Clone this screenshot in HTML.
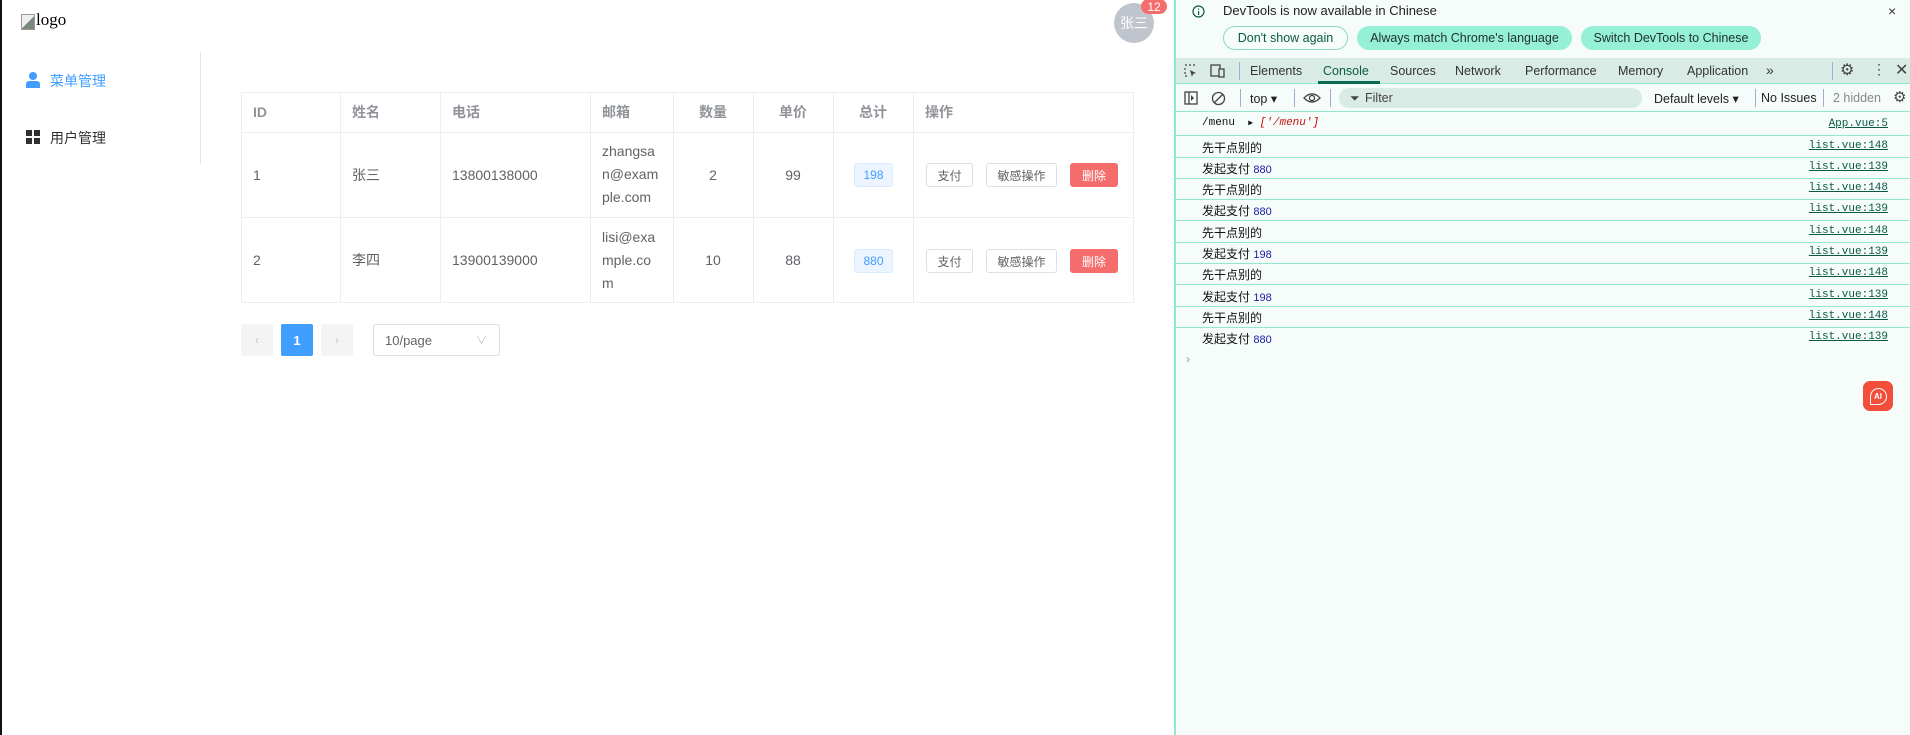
<!DOCTYPE html>
<html><head><meta charset="utf-8"><style>
*{box-sizing:border-box;margin:0;padding:0}
body{width:1910px;height:735px;overflow:hidden;background:#fff;font-family:"Liberation Sans","Noto Sans CJK SC",sans-serif;position:relative;font-size:14px;color:#606266}
.a{position:absolute}
.cell{position:absolute;display:flex;align-items:center;padding-left:12px;font-size:14px;color:#606266}
.hl{position:absolute;background:#ebeef5}
.btn{position:absolute;height:24px;border:1px solid #dcdfe6;border-radius:3px;background:#fff;font-size:12px;color:#606266;display:flex;align-items:center;justify-content:center}
.dv{font-size:12px;color:#222;font-family:"Liberation Sans","Noto Sans CJK SC",sans-serif}
.row{position:absolute;left:1175px;width:735px;height:21px;border-bottom:1px solid #8fe8cf}
.row .t{position:absolute;left:27px;top:2px;font-size:12px;color:#111}
.row .l{position:absolute;right:22px;top:3px;font-size:11px;color:#0b5a45;text-decoration:underline;font-family:"Liberation Mono",monospace}
.num{color:#1a1aa6;font-size:11px}
.tab{position:absolute;top:64px;font-size:12.5px;color:#333}
.em{position:absolute;padding-left:12px;font-size:14px;color:#606266;line-height:23px;word-break:break-all}
</style></head><body>
<div class="a" style="left:0;top:0;width:2px;height:735px;background:#111"></div>
<div class="a" style="left:21px;top:14px;width:14px;height:16px;border:1px solid #999;background:linear-gradient(135deg,#eee 50%,#7a8a7a 50%)"></div>
<div class="a" style="left:36px;top:10px;font-size:17px;color:#000;font-family:'Liberation Serif',serif">logo</div>
<div class="a" style="left:1114px;top:3px;width:40px;height:40px;border-radius:50%;background:#c0c4cc;color:#fff;font-size:14px;display:flex;align-items:center;justify-content:center">张三</div>
<div class="a" style="left:1141px;top:-1px;width:26px;height:15px;border-radius:8px;background:#f56c6c;color:#fff;font-size:12px;display:flex;align-items:center;justify-content:center">12</div>
<div class="a" style="left:200px;top:52px;width:1px;height:112px;background:#e6e6e6"></div>
<svg class="a" style="left:26px;top:72px" width="14" height="16" viewBox="0 0 14 16"><circle cx="7" cy="4" r="4" fill="#409eff"/><path d="M0 16 V12 Q0 9 4 9 H10 Q14 9 14 12 V16Z" fill="#409eff"/></svg>
<div class="a" style="left:50px;top:71px;font-size:14px;color:#409eff">菜单管理</div>
<svg class="a" style="left:26px;top:130px" width="14" height="14"><rect width="6" height="6" fill="#303133"/><rect x="8" width="6" height="6" fill="#303133"/><rect y="8" width="6" height="6" fill="#303133"/><rect x="8" y="8" width="6" height="6" fill="#303133"/></svg>
<div class="a" style="left:50px;top:128px;font-size:14px;color:#303133">用户管理</div>
<div class="a" style="left:241px;top:92px;width:893px;height:211px;border:1px solid #ebeef5"></div>
<div class="hl" style="left:241px;top:132px;width:893px;height:1px"></div>
<div class="hl" style="left:241px;top:217px;width:893px;height:1px"></div>
<div class="hl" style="left:340px;top:92px;width:1px;height:211px"></div>
<div class="hl" style="left:440px;top:92px;width:1px;height:211px"></div>
<div class="hl" style="left:590px;top:92px;width:1px;height:211px"></div>
<div class="hl" style="left:673px;top:92px;width:1px;height:211px"></div>
<div class="hl" style="left:753px;top:92px;width:1px;height:211px"></div>
<div class="hl" style="left:833px;top:92px;width:1px;height:211px"></div>
<div class="hl" style="left:913px;top:92px;width:1px;height:211px"></div>
<div class="cell" style="left:241px;top:92px;height:40px;font-weight:bold;color:#909399">ID</div>
<div class="cell" style="left:340px;top:92px;height:40px;font-weight:bold;color:#909399">姓名</div>
<div class="cell" style="left:440px;top:92px;height:40px;font-weight:bold;color:#909399">电话</div>
<div class="cell" style="left:590px;top:92px;height:40px;font-weight:bold;color:#909399">邮箱</div>
<div class="cell" style="left:673px;top:92px;width:80px;height:40px;padding:0;justify-content:center;font-weight:bold;color:#909399">数量</div>
<div class="cell" style="left:753px;top:92px;width:80px;height:40px;padding:0;justify-content:center;font-weight:bold;color:#909399">单价</div>
<div class="cell" style="left:833px;top:92px;width:80px;height:40px;padding:0;justify-content:center;font-weight:bold;color:#909399">总计</div>
<div class="cell" style="left:913px;top:92px;height:40px;font-weight:bold;color:#909399">操作</div>

<div class="cell" style="left:241px;top:132px;height:85px">1</div>
<div class="cell" style="left:340px;top:132px;height:85px">张三</div>
<div class="cell" style="left:440px;top:132px;height:85px">13800138000</div>
<div class="em" style="left:590px;top:140px">zhangsa<br>n@exam<br>ple.com</div>
<div class="cell" style="left:673px;top:132px;width:80px;height:85px;padding:0;justify-content:center">2</div>
<div class="cell" style="left:753px;top:132px;width:80px;height:85px;padding:0;justify-content:center">99</div>
<div class="a" style="left:854px;top:163px;width:39px;height:24px;background:#ecf5ff;border:1px solid #d9ecff;border-radius:3px;color:#409eff;font-size:12px;display:flex;align-items:center;justify-content:center">198</div>
<div class="btn" style="left:926px;top:163px;width:47px">支付</div>
<div class="btn" style="left:986px;top:163px;width:71px">敏感操作</div>
<div class="btn" style="left:1070px;top:163px;width:48px;background:#f56c6c;border-color:#f56c6c;color:#fff">删除</div>

<div class="cell" style="left:241px;top:217px;height:86px">2</div>
<div class="cell" style="left:340px;top:217px;height:86px">李四</div>
<div class="cell" style="left:440px;top:217px;height:86px">13900139000</div>
<div class="em" style="left:590px;top:226px">lisi@exa<br>mple.co<br>m</div>
<div class="cell" style="left:673px;top:217px;width:80px;height:86px;padding:0;justify-content:center">10</div>
<div class="cell" style="left:753px;top:217px;width:80px;height:86px;padding:0;justify-content:center">88</div>
<div class="a" style="left:854px;top:249px;width:39px;height:24px;background:#ecf5ff;border:1px solid #d9ecff;border-radius:3px;color:#409eff;font-size:12px;display:flex;align-items:center;justify-content:center">880</div>
<div class="btn" style="left:926px;top:249px;width:47px">支付</div>
<div class="btn" style="left:986px;top:249px;width:71px">敏感操作</div>
<div class="btn" style="left:1070px;top:249px;width:48px;background:#f56c6c;border-color:#f56c6c;color:#fff">删除</div>
<div class="a" style="left:241px;top:324px;width:32px;height:32px;background:#f4f4f5;color:#c0c4cc;display:flex;align-items:center;justify-content:center;font-size:12px;border-radius:2px">‹</div>
<div class="a" style="left:281px;top:324px;width:32px;height:32px;background:#409eff;color:#fff;display:flex;align-items:center;justify-content:center;font-size:13px;font-weight:bold;border-radius:2px">1</div>
<div class="a" style="left:321px;top:324px;width:32px;height:32px;background:#f4f4f5;color:#c0c4cc;display:flex;align-items:center;justify-content:center;font-size:12px;border-radius:2px">›</div>
<div class="a" style="left:373px;top:324px;width:127px;height:32px;border:1px solid #dcdfe6;border-radius:3px;font-size:13px;color:#606266;padding:8px 11px">10/page<span style="position:absolute;right:12px;top:7px;color:#c0c4cc;font-size:11px">∨</span></div>

<div class="a" style="left:1174px;top:0;width:736px;height:735px;background:#f6fcf9;border-left:2px solid #8fe8cf"></div>
<svg class="a" style="left:1192px;top:5px" width="13" height="13"><circle cx="6.5" cy="6.5" r="5.5" fill="none" stroke="#0b5a45" stroke-width="1.2"/><rect x="6" y="6" width="1.2" height="4" fill="#0b5a45"/><rect x="6" y="3.5" width="1.2" height="1.2" fill="#0b5a45"/></svg>
<div class="a dv" style="left:1223px;top:3px;font-size:13px;color:#1f1f1f">DevTools is now available in Chinese</div>
<div class="a" style="left:1888px;top:3px;font-size:14px;color:#333">×</div>
<div class="a" style="left:1223px;top:26px;width:125px;height:24px;border:1px solid #8fd8c4;border-radius:12px;font-size:12.5px;color:#0b5a45;display:flex;align-items:center;justify-content:center">Don't show again</div>
<div class="a" style="left:1357px;top:26px;width:215px;height:24px;background:#96f0d6;border-radius:12px;font-size:12.5px;color:#1f2f2a;display:flex;align-items:center;justify-content:center">Always match Chrome's language</div>
<div class="a" style="left:1581px;top:26px;width:180px;height:24px;background:#96f0d6;border-radius:12px;font-size:12.5px;color:#1f2f2a;display:flex;align-items:center;justify-content:center">Switch DevTools to Chinese</div>
<div class="a" style="left:1176px;top:58px;width:734px;height:26px;background:#d8ebe5;border-bottom:1px solid #8fe8cf"></div>
<svg class="a" style="left:1184px;top:64px" width="14" height="14"><path d="M1 1h2M5 1h2M9 1h2M1 4v2M1 8v2M1 12h2" stroke="#444" stroke-width="1.2"/><path d="M6 6l6 3-3 1-1 3z" fill="#444"/></svg>
<svg class="a" style="left:1210px;top:64px" width="16" height="14"><rect x="1" y="1" width="9" height="11" fill="none" stroke="#444" stroke-width="1.3"/><rect x="9" y="5" width="5" height="8" fill="#d8ebe5" stroke="#444" stroke-width="1.3"/></svg>
<div class="a" style="left:1239px;top:62px;width:1px;height:18px;background:#aac"></div>
<div class="tab" style="left:1250px">Elements</div>
<div class="tab" style="left:1323px;color:#0b5a45">Console</div>
<div class="a" style="left:1318px;top:81px;width:62px;height:3px;background:#0b6a52"></div>
<div class="tab" style="left:1390px">Sources</div>
<div class="tab" style="left:1455px">Network</div>
<div class="tab" style="left:1525px">Performance</div>
<div class="tab" style="left:1618px">Memory</div>
<div class="tab" style="left:1687px">Application</div>
<div class="tab" style="left:1766px;font-size:14px;top:62px">»</div>
<div class="a" style="left:1832px;top:62px;width:1px;height:18px;background:#aac"></div>
<div class="a" style="left:1840px;top:60px;font-size:16px;color:#444">⚙</div>
<div class="a" style="left:1872px;top:61px;font-size:14px;color:#444">⋮</div>
<div class="a" style="left:1895px;top:60px;font-size:16px;color:#444">✕</div>
<div class="a" style="left:1176px;top:111px;width:734px;height:1px;background:#8fe8cf"></div>
<svg class="a" style="left:1184px;top:91px" width="14" height="14"><rect x="1" y="1" width="12" height="12" fill="none" stroke="#444" stroke-width="1.3"/><path d="M5 1v12" stroke="#444" stroke-width="1.3"/><path d="M7 4l3 3-3 3z" fill="#444"/></svg>
<svg class="a" style="left:1211px;top:91px" width="15" height="15"><circle cx="7.5" cy="7.5" r="6" fill="none" stroke="#444" stroke-width="1.3"/><path d="M3.5 11.5l8-8" stroke="#444" stroke-width="1.3"/></svg>
<div class="a" style="left:1240px;top:89px;width:1px;height:18px;background:#aac"></div>
<div class="a dv" style="left:1250px;top:91px;font-size:12.5px">top ▾</div>
<div class="a" style="left:1294px;top:89px;width:1px;height:18px;background:#aac"></div>
<svg class="a" style="left:1303px;top:91px" width="18" height="14"><path d="M1 7Q9 -1 17 7Q9 15 1 7Z" fill="none" stroke="#444" stroke-width="1.3"/><circle cx="9" cy="7" r="2.5" fill="none" stroke="#444" stroke-width="1.3"/></svg>
<div class="a" style="left:1330px;top:89px;width:1px;height:18px;background:#aac"></div>
<div class="a" style="left:1339px;top:88px;width:303px;height:20px;background:#d8ebe5;border-radius:10px;font-size:12.5px;color:#444;padding:3px 0 0 26px">Filter</div>
<div class="a" style="left:1350px;top:91px;font-size:12px;color:#444">⏷</div>
<div class="a dv" style="left:1654px;top:91px;font-size:12.5px">Default levels ▾</div>
<div class="a" style="left:1755px;top:89px;width:1px;height:18px;background:#aac"></div>
<div class="a dv" style="left:1761px;top:91px;font-size:12.5px">No Issues</div>
<div class="a" style="left:1823px;top:89px;width:1px;height:18px;background:#aac"></div>
<div class="a dv" style="left:1833px;top:91px;font-size:12.5px;color:#888">2 hidden</div>
<div class="a" style="left:1893px;top:88px;font-size:15px;color:#444">⚙</div>

<div class="row" style="top:115px"><span class="t" style="font-family:'Liberation Mono',monospace;font-size:11px">/menu &nbsp;<span style="font-size:8px">▶</span> <i style="color:#c80000">[<span style="color:#c41a16">'/menu'</span>]</i></span><span class="l">App.vue:5</span></div>
<div class="row" style="top:137px"><span class="t">先干点别的</span><span class="l">list.vue:148</span></div>
<div class="row" style="top:158px"><span class="t">发起支付 <span class="num">880</span></span><span class="l">list.vue:139</span></div>
<div class="row" style="top:179px"><span class="t">先干点别的</span><span class="l">list.vue:148</span></div>
<div class="row" style="top:200px"><span class="t">发起支付 <span class="num">880</span></span><span class="l">list.vue:139</span></div>
<div class="row" style="top:222px"><span class="t">先干点别的</span><span class="l">list.vue:148</span></div>
<div class="row" style="top:243px"><span class="t">发起支付 <span class="num">198</span></span><span class="l">list.vue:139</span></div>
<div class="row" style="top:264px"><span class="t">先干点别的</span><span class="l">list.vue:148</span></div>
<div class="row" style="top:286px"><span class="t">发起支付 <span class="num">198</span></span><span class="l">list.vue:139</span></div>
<div class="row" style="top:307px"><span class="t">先干点别的</span><span class="l">list.vue:148</span></div>
<div class="row" style="top:328px;border-bottom:none"><span class="t">发起支付 <span class="num">880</span></span><span class="l">list.vue:139</span></div>
<div class="a" style="left:1186px;top:352px;font-size:12px;color:#6aa">›</div>
<div class="a" style="left:1863px;top:381px;width:30px;height:30px;background:#f24e3a;border-radius:7px;display:flex;align-items:center;justify-content:center"><div style="width:17px;height:17px;border:1.5px solid #fff;border-radius:50% 50% 50% 0;color:#fff;font-size:8px;font-weight:bold;display:flex;align-items:center;justify-content:center">AI</div></div>
</body></html>
